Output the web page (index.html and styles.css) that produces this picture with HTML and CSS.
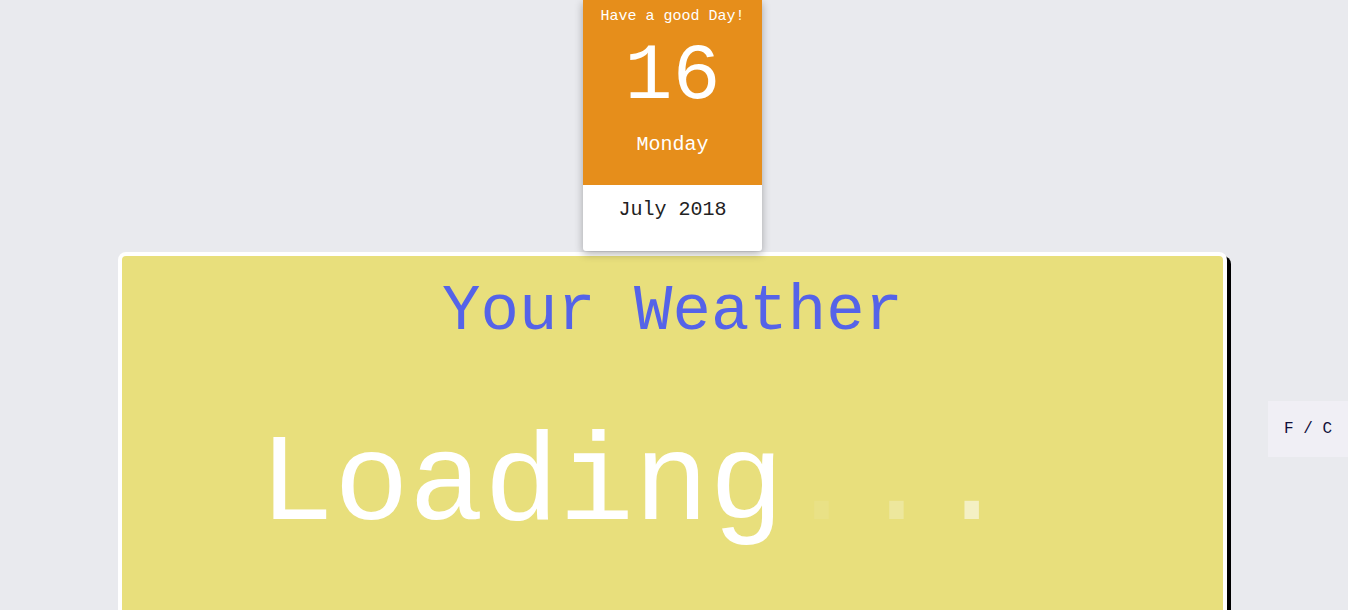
FILE: index.html
```html
<!DOCTYPE html>
<html>
<head>
<meta charset="utf-8">
<link rel="stylesheet" href="styles.css">
</head>
<body>
<div class="page">
  <div class="calendar">
    <div class="cal-top">
      <div class="greet">Have a good Day!</div>
      <div class="day-num">16</div>
      <div class="day-name">Monday</div>
    </div>
    <div class="cal-bottom">July 2018</div>
  </div>
  <div class="weather">
    <h1 class="title">Your Weather</h1>
    <div class="loading">Loading<span class="dot d1">.</span><span class="dot d2">.</span><span class="dot d3">.</span></div>
  </div>
</div>
<div class="unit-toggle">F / C</div>
</body>
</html>
```
FILE: styles.css
```css
html, body {
  margin: 0;
  padding: 0;
  background: #e9eaee;
  font-family: "Liberation Mono", "Courier New", monospace;
  overflow: hidden;
  height: 610px;
}
.page {
  width: 1345px;
}
.calendar {
  position: relative;
  z-index: 2;
  width: 179px;
  margin: 0 auto;
  background: #ffffff;
  border-radius: 0 0 3px 3px;
  box-shadow: 0 3px 9px rgba(0, 0, 0, 0.3);
  text-align: center;
}
.cal-top {
  background: #e68e1b;
  color: #ffffff;
  padding: 8px 0 29px;
}
.greet {
  font-size: 15px;
  line-height: 17px;
}
.day-num {
  font-size: 80px;
  line-height: 86px;
  margin-top: 9px;
}
.day-name {
  font-size: 20px;
  line-height: 23px;
  margin-top: 13px;
}
.cal-bottom {
  color: #222222;
  font-size: 20px;
  line-height: 23px;
  padding: 13px 0 30px;
}
.weather {
  position: relative;
  z-index: 1;
  box-sizing: border-box;
  width: 1109px;
  height: 420px;
  margin: 1px 0 0 118px;
  background: #e8df7c;
  border: 4px solid #ffffff;
  border-radius: 8px;
  box-shadow: 4px 4px 0 #000000;
}
.title {
  margin: 0;
  padding-top: 20px;
  font-weight: normal;
  font-size: 64px;
  line-height: 72px;
  color: #5563e8;
  text-align: center;
}
.loading {
  margin-top: 67px;
  padding-left: 137px;
  font-size: 125px;
  line-height: 142px;
  color: #ffffff;
}
.dot.d1 { opacity: 0.08; }
.dot.d2 { opacity: 0.25; }
.dot.d3 { opacity: 0.55; }
.unit-toggle {
  position: absolute;
  right: 0;
  top: 401px;
  width: 80px;
  height: 56px;
  box-sizing: border-box;
  padding-left: 16px;
  background: #f0eff5;
  color: #10103a;
  font-size: 16px;
  line-height: 56px;
}
```
